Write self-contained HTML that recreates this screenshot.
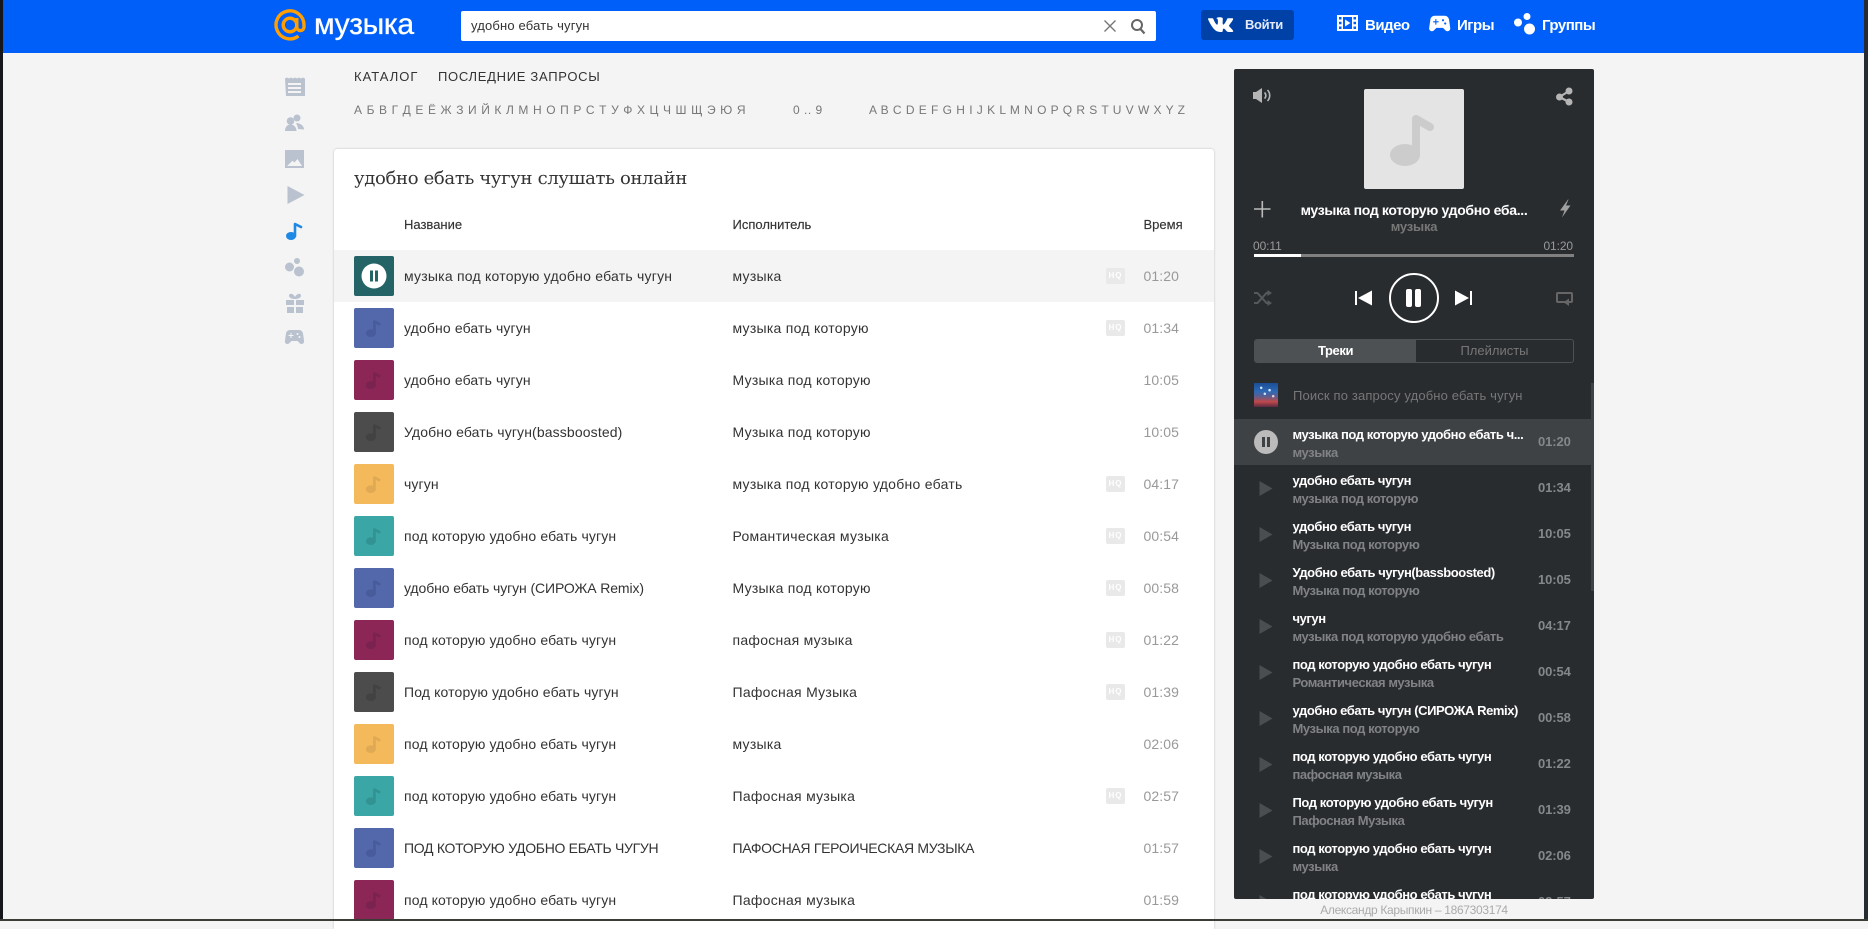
<!DOCTYPE html>
<html lang="ru"><head><meta charset="utf-8"><title>Музыка</title>
<style>
*{box-sizing:border-box}
html,body{margin:0;padding:0;width:1868px;height:921px;overflow:hidden;background:#f4f4f4;font-family:"Liberation Sans","DejaVu Sans",sans-serif;color:#333}
.a{position:absolute;white-space:nowrap}
#hdr{position:absolute;left:0;top:0;width:1868px;height:53px;background:#005ff9}
#search{position:absolute;left:461px;top:11px;width:695px;height:30px;background:#fff;border-radius:2px;font-size:13px;line-height:30px;padding-left:10px;color:#333;letter-spacing:.17px}
#vk{position:absolute;left:1201px;top:10px;width:93px;height:30px;background:#0041a8;border-radius:3px}
.hl{color:#fff;font-size:15px;font-weight:bold;letter-spacing:-.5px;line-height:20px}
.tb{font-size:13px;line-height:16px;letter-spacing:1px;color:#333}
.al{font-size:12px;line-height:16px;color:#777}
#card{position:absolute;left:334px;top:149px;width:880px;height:780px;background:#fff;border-radius:3px 3px 0 0;box-shadow:0 0 2px rgba(0,0,0,.22);overflow:hidden}
#card h1{position:absolute;left:20px;top:18px;margin:0;font:normal 18px/24px "DejaVu Serif",serif;letter-spacing:-.33px;color:#333;white-space:nowrap}
.th{position:absolute;top:68px;font-size:13px;line-height:16px;color:#333;letter-spacing:0;-webkit-text-stroke:.15px #333}
#rows{position:absolute;left:0;top:101px;width:880px}
.r{position:relative;height:52px;font-size:14px;line-height:52px;color:#333;letter-spacing:.13px}
.r.on{background:#f4f4f4}
.r i{position:absolute;left:20px;top:6px;width:40px;height:40px;border-radius:2px;display:block}
.r svg{position:absolute;left:20px;top:6px;width:40px;height:40px}
.r b{position:absolute;left:70px;font-weight:normal;white-space:nowrap}
.r u{position:absolute;left:398.500px;text-decoration:none;white-space:nowrap;letter-spacing:.27px}
.r s{position:absolute;left:772px;top:18px;width:19px;height:16px;background:#e9e9e9;border-radius:2px;text-decoration:none;color:#fff;font-size:8px;font-weight:bold;line-height:16px;text-align:center;letter-spacing:1px}
.r em{position:absolute;left:809.500px;font-style:normal;color:#999;letter-spacing:.1px}
#pl{position:absolute;left:1234px;top:69px;width:360px;height:830px;background:#292c2f;border-radius:2px;overflow:hidden}
#cov{position:absolute;left:130px;top:20px;width:100px;height:100px;background:#e4e4e4;border-radius:2px}
#tabs{position:absolute;left:20px;top:270px;width:320px;height:24px;border:1px solid #4d5154;border-radius:3px;overflow:hidden;font-size:13px;line-height:22px;text-align:center}
#tabs div{position:absolute;top:0;height:22px}
#list{position:absolute;left:0;top:350px;width:357px;height:480px;overflow:hidden}
.l{position:relative;height:46px}
.l.on{background:#3f4245}
.l b{position:absolute;left:58.500px;top:7px;font-size:13px;line-height:18px;color:#fff;white-space:nowrap;letter-spacing:-.42px}
.l u{position:absolute;left:58.500px;top:25px;font-size:13px;line-height:18px;color:#808285;font-weight:bold;text-decoration:none;white-space:nowrap;letter-spacing:-.42px}
.l em{position:absolute;left:304px;top:14px;font-style:normal;font-size:13px;font-weight:bold;line-height:18px;color:#85888b;letter-spacing:-.1px}
.l svg{position:absolute;left:25px;top:13px;width:14px;height:20px}
#ov{position:absolute;left:0;top:0;width:1868px;height:921px;pointer-events:none}
</style></head><body>
<svg width="0" height="0" style="position:absolute"><defs>
<symbol id="n" viewBox="0 0 100 100"><ellipse cx="41" cy="66" rx="15" ry="11" stroke="none"/><path d="M52 66V30L66 38" fill="none" stroke-width="8" stroke-linecap="round" stroke-linejoin="round"/></symbol>
<symbol id="m" viewBox="0 0 100 100"><ellipse cx="42" cy="63" rx="12.500" ry="9.500" stroke="none"/><path d="M51 63V34L63 40" fill="none" stroke-width="7" stroke-linecap="round" stroke-linejoin="round"/></symbol>
<symbol id="p" viewBox="0 0 14 20"><path d="M0.500 3L13.500 10.500L0.500 18z" fill="#4b4e51"/></symbol>
</defs></svg>

<div id="hdr"></div>
<div class="a" style="left:314px;top:8px;font-size:30px;line-height:34px;color:#fff;letter-spacing:-.35px;-webkit-text-stroke:.35px #fff">музыка</div>
<div id="search">удобно ебать чугун</div>
<div id="vk"></div>
<div class="a" style="left:1245px;top:15px;font-size:13px;font-weight:bold;line-height:20px;color:#e6ecf7;letter-spacing:-.35px">Войти</div>
<div class="a hl" style="left:1365px;top:16px">Видео</div>
<div class="a hl" style="left:1457px;top:16px">Игры</div>
<div class="a hl" style="left:1542px;top:16px">Группы</div>

<div class="a tb" style="left:354px;top:69px">КАТАЛОГ</div>
<div class="a tb" style="left:438px;top:69px;letter-spacing:.7px">ПОСЛЕДНИЕ ЗАПРОСЫ</div>
<div class="a al" style="left:354px;top:102px;letter-spacing:.62px">А Б В Г Д Е Ё Ж З И Й К Л М Н О П Р С Т У Ф Х Ц Ч Ш Щ Э Ю Я</div>
<div class="a al" style="left:793px;top:102px;letter-spacing:.5px">0 .. 9</div>
<div class="a al" style="left:869px;top:102px;letter-spacing:.47px">A B C D E F G H I J K L M N O P Q R S T U V W X Y Z</div>

<div id="card">
<h1>удобно ебать чугун слушать онлайн</h1>
<div class="th" style="left:70px">Название</div>
<div class="th" style="left:398.500px">Исполнитель</div>
<div class="th" style="left:809.500px">Время</div>
<div id="rows">
<div class="r on"><i style="background:#246466"></i><svg viewBox="0 0 40 40"><circle cx="20" cy="20" r="12.5" fill="#fff"/><rect x="16" y="14.5" width="3" height="11" fill="#246466"/><rect x="21" y="14.5" width="3" height="11" fill="#246466"/></svg><b style="letter-spacing:.23px">музыка под которую удобно ебать чугун</b><u>музыка</u><s>HQ</s><em>01:20</em></div>
<div class="r"><i style="background:#5367ab"></i><svg fill="#485b9b" stroke="#485b9b"><use href="#m"/></svg><b>удобно ебать чугун</b><u>музыка под которую</u><s>HQ</s><em>01:34</em></div>
<div class="r"><i style="background:#8b2657"></i><svg fill="#7b2350" stroke="#7b2350"><use href="#m"/></svg><b>удобно ебать чугун</b><u>Музыка под которую</u><em>10:05</em></div>
<div class="r"><i style="background:#4c4c4c"></i><svg fill="#424242" stroke="#424242"><use href="#m"/></svg><b>Удобно ебать чугун(bassboosted)</b><u>Музыка под которую</u><em>10:05</em></div>
<div class="r"><i style="background:#f4b95a"></i><svg fill="#e0a953" stroke="#e0a953"><use href="#m"/></svg><b>чугун</b><u>музыка под которую удобно ебать</u><s>HQ</s><em>04:17</em></div>
<div class="r"><i style="background:#3aa6a6"></i><svg fill="#339393" stroke="#339393"><use href="#m"/></svg><b>под которую удобно ебать чугун</b><u>Романтическая музыка</u><s>HQ</s><em>00:54</em></div>
<div class="r"><i style="background:#5367ab"></i><svg fill="#485b9b" stroke="#485b9b"><use href="#m"/></svg><b style="letter-spacing:-.1px">удобно ебать чугун (СИРОЖА Remix)</b><u>Музыка под которую</u><s>HQ</s><em>00:58</em></div>
<div class="r"><i style="background:#8b2657"></i><svg fill="#7b2350" stroke="#7b2350"><use href="#m"/></svg><b>под которую удобно ебать чугун</b><u>пафосная музыка</u><s>HQ</s><em>01:22</em></div>
<div class="r"><i style="background:#4c4c4c"></i><svg fill="#424242" stroke="#424242"><use href="#m"/></svg><b>Под которую удобно ебать чугун</b><u>Пафосная Музыка</u><s>HQ</s><em>01:39</em></div>
<div class="r"><i style="background:#f4b95a"></i><svg fill="#e0a953" stroke="#e0a953"><use href="#m"/></svg><b>под которую удобно ебать чугун</b><u>музыка</u><em>02:06</em></div>
<div class="r"><i style="background:#3aa6a6"></i><svg fill="#339393" stroke="#339393"><use href="#m"/></svg><b>под которую удобно ебать чугун</b><u>Пафосная музыка</u><s>HQ</s><em>02:57</em></div>
<div class="r"><i style="background:#5367ab"></i><svg fill="#485b9b" stroke="#485b9b"><use href="#m"/></svg><b style="letter-spacing:-.3px">ПОД КОТОРУЮ УДОБНО ЕБАТЬ ЧУГУН</b><u style="letter-spacing:-.3px">ПАФОСНАЯ ГЕРОИЧЕСКАЯ МУЗЫКА</u><em>01:57</em></div>
<div class="r"><i style="background:#8b2657"></i><svg fill="#7b2350" stroke="#7b2350"><use href="#m"/></svg><b>под которую удобно ебать чугун</b><u>Пафосная музыка</u><em>01:59</em></div>
</div>
</div>

<div id="pl">
<div id="cov"><svg width="100" height="100" fill="#ccc" stroke="#ccc"><use href="#n"/></svg></div>
<div class="a" style="left:0;width:360px;top:132px;text-align:center;font-size:14px;font-weight:bold;line-height:18px;color:#fff;letter-spacing:-.33px">музыка под которую удобно еба...</div>
<div class="a" style="left:0;width:360px;top:149px;text-align:center;font-size:13px;font-weight:bold;line-height:18px;color:#777;letter-spacing:-.2px">музыка</div>
<div class="a" style="left:19px;top:170px;font-size:12px;line-height:14px;color:#999;letter-spacing:-.1px">00:11</div>
<div class="a" style="right:21px;top:170px;font-size:12px;line-height:14px;color:#999;letter-spacing:-.1px">01:20</div>
<div class="a" style="left:20px;top:185px;width:320px;height:3px;background:#808080"></div>
<div class="a" style="left:20px;top:185px;width:47px;height:3px;background:#fff"></div>
<div id="tabs"><div style="left:0;width:161px;background:#4d5154;color:#fff;font-weight:bold;letter-spacing:-.4px">Треки</div><div style="left:161px;width:157px;color:#777">Плейлисты</div></div>
<div class="a" style="left:20px;top:314px;width:24px;height:24px;background:radial-gradient(circle at 30% 20%,#cfe6ff 0,#cfe6ff 1px,transparent 1.5px),radial-gradient(circle at 65% 30%,#e0f0ff 0,#e0f0ff 1px,transparent 1.5px),radial-gradient(circle at 45% 45%,#cfe6ff 0,#cfe6ff 1px,transparent 1.5px),radial-gradient(circle at 80% 55%,#f0d0d0 0,#f0d0d0 1px,transparent 1.5px),linear-gradient(180deg,#1a4f96 0%,#2f68b5 35%,#5a5f90 55%,#c0484a 78%,#5a2a40 100%)"></div>
<div class="a" style="left:59px;top:318px;font-size:13px;line-height:18px;color:#777;letter-spacing:.15px">Поиск по запросу удобно ебать чугун</div>
<div class="a" style="left:357px;top:314px;width:3px;height:208px;background:#3f4245"></div>
<div id="list">
<div class="l on"><svg viewBox="0 0 14 20" style="overflow:visible"><circle cx="7" cy="10" r="12" fill="#bbb"/><rect x="3" y="5" width="3" height="10" fill="#3f4245"/><rect x="8" y="5" width="3" height="10" fill="#3f4245"/></svg><b>музыка под которую удобно ебать ч...</b><u>музыка</u><em>01:20</em></div>
<div class="l"><svg><use href="#p"/></svg><b>удобно ебать чугун</b><u>музыка под которую</u><em>01:34</em></div>
<div class="l"><svg><use href="#p"/></svg><b>удобно ебать чугун</b><u>Музыка под которую</u><em>10:05</em></div>
<div class="l"><svg><use href="#p"/></svg><b>Удобно ебать чугун(bassboosted)</b><u>Музыка под которую</u><em>10:05</em></div>
<div class="l"><svg><use href="#p"/></svg><b>чугун</b><u>музыка под которую удобно ебать</u><em>04:17</em></div>
<div class="l"><svg><use href="#p"/></svg><b>под которую удобно ебать чугун</b><u>Романтическая музыка</u><em>00:54</em></div>
<div class="l"><svg><use href="#p"/></svg><b>удобно ебать чугун (СИРОЖА Remix)</b><u>Музыка под которую</u><em>00:58</em></div>
<div class="l"><svg><use href="#p"/></svg><b>под которую удобно ебать чугун</b><u>пафосная музыка</u><em>01:22</em></div>
<div class="l"><svg><use href="#p"/></svg><b>Под которую удобно ебать чугун</b><u>Пафосная Музыка</u><em>01:39</em></div>
<div class="l"><svg><use href="#p"/></svg><b>под которую удобно ебать чугун</b><u>музыка</u><em>02:06</em></div>
<div class="l"><svg><use href="#p"/></svg><b>под которую удобно ебать чугун</b><u>Пафосная музыка</u><em>02:57</em></div>
</div>
</div>
<div class="a" style="left:1234px;width:360px;top:903px;text-align:center;font-size:12px;line-height:14px;color:#aaa;letter-spacing:-.32px">Александр Карыпкин – 1867303174</div>

<svg id="ov" viewBox="0 0 1868 921">
<!-- logo -->
<g fill="none" stroke="#ff9e00" stroke-width="3.4"><circle cx="290" cy="25" r="6.8"/><path d="M296.8 18v9a3.6 3.6 0 0 0 7.2 0v-2a14 14 0 1 0-5.5 11"/></g>
<!-- search icons -->
<path d="M1104.500 20.500l11 11m0-11l-11 11" stroke="#777" stroke-width="1.4" fill="none"/>
<circle cx="1137" cy="25" r="5" fill="none" stroke="#666" stroke-width="2"/><path d="M1140.500 29l4 4.500" stroke="#666" stroke-width="2.200" fill="none"/>
<!-- vk -->
<path transform="translate(1208 12) scale(1.05)" fill="#fff" d="M13.162 18.994c.609 0 .858-.406.851-.915-.031-1.917.714-2.949 2.059-1.604 1.488 1.488 1.796 2.519 3.603 2.519h3.2c.808 0 1.126-.26 1.126-.668 0-.863-1.421-2.386-2.625-3.504-1.686-1.565-1.765-1.602-.313-3.486 1.801-2.339 4.157-5.336 2.073-5.336h-3.981c-.772 0-.828.435-1.103 1.083-.995 2.347-2.886 5.387-3.604 4.922-.751-.485-.407-2.406-.35-5.261.015-.754.011-1.271-1.141-1.539-.629-.145-1.241-.205-1.809-.205-2.273 0-3.841.953-2.95 1.119 1.571.293 1.42 3.692 1.054 5.16-.638 2.556-3.036-2.024-4.035-4.305-.241-.548-.315-.974-1.175-.974h-3.255c-.492 0-.787.16-.787.516 0 .602 2.96 6.72 5.786 9.77 2.756 2.975 5.48 2.708 7.376 2.708z"/>
<!-- header: video -->
<path fill="#fff" fill-rule="evenodd" d="M1337 15h21v16h-21zM1339 17v2.500h2.500v-2.500zM1339 21.800v2.500h2.500v-2.500zM1339 26.500v2.500h2.500v-2.500zM1353.500 17v2.500h2.500v-2.500zM1353.500 21.800v2.500h2.500v-2.500zM1353.500 26.500v2.500h2.500v-2.500zM1343 17v12h9v-12z"/>
<path fill="#fff" d="M1345 19.500l5.500 3.500-5.500 3.500z"/>
<!-- header: games -->
<path transform="translate(1426.500 10.300) scale(1.1)" fill="#fff" d="M21.58 16.09l-1.09-7.66A3.996 3.996 0 0 0 16.53 5H7.47C5.48 5 3.79 6.46 3.51 8.43l-1.09 7.66C2.2 17.63 3.39 19 4.94 19c.68 0 1.32-.27 1.8-.75L9 16h6l2.25 2.25c.48.48 1.13.75 1.8.75 1.56 0 2.75-1.37 2.53-2.91zM11 11H9v2H8v-2H6v-1h2V8h1v2h2v1zm4-1c-.55 0-1-.45-1-1s.45-1 1-1 1 .45 1 1-.45 1-1 1zm2 3c-.55 0-1-.45-1-1s.45-1 1-1 1 .45 1 1-.45 1-1 1z"/>
<!-- header: groups -->
<g fill="#fff"><circle cx="1518" cy="22.500" r="4"/><circle cx="1527" cy="16.500" r="3.500"/><circle cx="1529.500" cy="29" r="5.500"/></g>
<!-- sidebar -->
<g fill="#b9c2ce">
<path fill-rule="evenodd" d="M285 78.500l2 -1 2 1 2-1 2 1 2-1 2 1 2-1 2 1 2-1 2 1V96h-19zM288 83v2h13v-2zM288 87v2h13v-2zM288 91v2h13v-2z"/>
<circle cx="297" cy="118" r="3.500"/><circle cx="290.500" cy="121" r="3.800"/><path d="M285 131c0-4 2.500-6.500 5.500-6.500s6 2.500 6 6.500zM296 123c3 0 8 2 8 6.500l-6-.5c0-2-1-4-2-6z"/>
<path fill-rule="evenodd" d="M285 150h19v18h-19zM287 166h15l-4.500-7-3 3.500-2-1.800z"/>
<path d="M287.500 186l17 9-17 9z"/>
</g>
<g fill="#1e88e5"><ellipse cx="291" cy="236" rx="5" ry="4"/><path d="M295 236V224l6 3" fill="none" stroke="#1e88e5" stroke-width="2.600" stroke-linecap="round" stroke-linejoin="round"/></g>
<g fill="#b9c2ce">
<circle cx="289.500" cy="267" r="4.500"/><circle cx="297" cy="261" r="3"/><circle cx="299" cy="271.500" r="5"/>
<path d="M286 300h8v5h-8zM296 300h8v5h-8zM287 307h7v6h-7zM296 307h7v6h-7z"/>
<path d="M295 299c-3 0-6-1-6-3.500s4-2.500 6 1.500c2-4 6-4 6-1.500s-3 3.500-6 3.500z"/>
<path transform="translate(282.500 325)" d="M21.58 16.09l-1.09-7.66A3.996 3.996 0 0 0 16.53 5H7.47C5.48 5 3.79 6.46 3.51 8.43l-1.09 7.66C2.2 17.63 3.39 19 4.94 19c.68 0 1.32-.27 1.8-.75L9 16h6l2.25 2.25c.48.48 1.13.75 1.8.75 1.56 0 2.75-1.37 2.53-2.91zM11 11H9v2H8v-2H6v-1h2V8h1v2h2v1zm4-1c-.55 0-1-.45-1-1s.45-1 1-1 1 .45 1 1-.45 1-1 1zm2 3c-.55 0-1-.45-1-1s.45-1 1-1 1 .45 1 1-.45 1-1 1z"/>
</g>
<!-- player: speaker, share -->
<path fill="#b5b5b5" d="M1253 92h3l6-4v15l-6-4h-3z"/><path d="M1264.500 92.500a4 4 0 0 1 0 6M1267.500 90a8 8 0 0 1 0 11" fill="none" stroke="#b5b5b5" stroke-width="1.600"/>
<g fill="#b5b5b5"><circle cx="1569" cy="91" r="3.500"/><circle cx="1559.500" cy="97" r="3.500"/><circle cx="1569" cy="102" r="3.500"/></g><path d="M1569 91l-9.500 6 9.500 5" fill="none" stroke="#b5b5b5" stroke-width="2.200"/>
<!-- plus, bolt -->
<path d="M1254 209h16.500M1262.300 201v16.500" stroke="#bbb" stroke-width="1.600" fill="none"/>
<path fill="#a0a0a0" d="M1568 199.500l-8 11h4.500l-2.500 7 8.500-12h-4.500l2.500-6z"/>
<!-- shuffle -->
<path d="M1254 293h3.500l9 10h3M1254 303h3.500l9-10h3" fill="none" stroke="#56595c" stroke-width="2"/><path fill="#56595c" d="M1267.500 290l4.500 3-4.500 3zM1267.500 300l4.500 3-4.500 3z"/>
<!-- prev, pause, next -->
<g fill="#fff"><rect x="1355" y="291" width="2" height="14"/><path d="M1372 290.500v15l-14-7.500z"/>
<path d="M1455 290.500v15l14-7.500z"/><rect x="1470" y="291" width="2" height="14"/>
<rect x="1406" y="289" width="6" height="18" rx="2"/><rect x="1415" y="289" width="6" height="18" rx="2"/></g>
<circle cx="1414" cy="298" r="24" fill="none" stroke="#fff" stroke-width="2"/>
<!-- repeat -->
<path d="M1565 302h-7a1 1 0 0 1-1-1v-7a1 1 0 0 1 1-1h13a1 1 0 0 1 1 1v7a1 1 0 0 1-1 1h-2" fill="none" stroke="#666" stroke-width="2"/><path fill="#666" d="M1569 298.500v7.500l-5.500-3.700z"/>
</svg>

<div class="a" style="left:0;top:0;width:3px;height:921px;background:#15171a"></div>
<div class="a" style="right:0;top:0;width:4px;height:921px;background:#252a33"></div>
<div class="a" style="left:0;top:919px;width:1868px;height:2px;background:#3a3c36"></div>
</body></html>
